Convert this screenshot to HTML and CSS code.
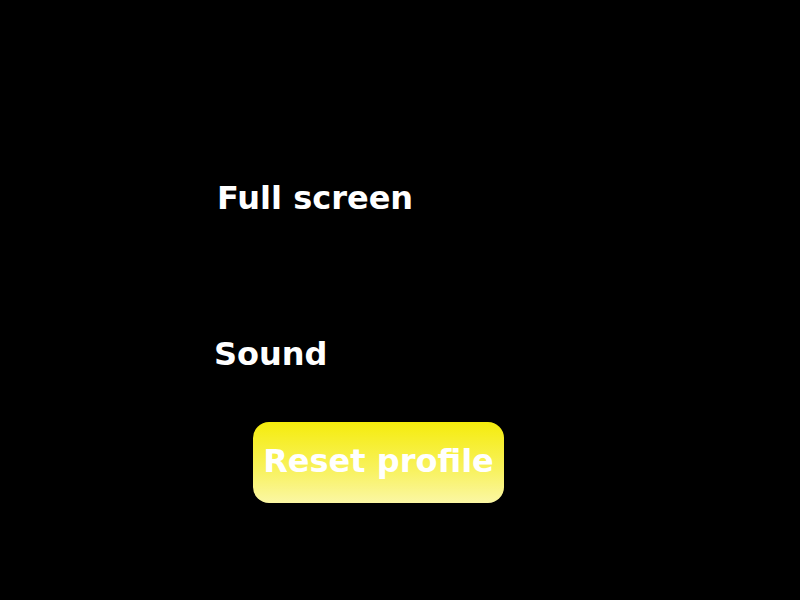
FILE: index.html
```html
<!DOCTYPE html>
<html lang="en">
<head>
  <meta charset="UTF-8">
  <title>Options</title>
  <link rel="stylesheet" href="styles.css">
</head>
<body>

  <div class="menu">
    <div class="option option-fullscreen">Full screen</div>
    <div class="option option-sound">Sound</div>
    <button class="reset-button">Reset profile</button>
  </div>

</body>
</html>
```

FILE: styles.css
```css
html, body {
  margin: 0;
  height: 100%;
  background-color: #000;
}

body {
  font-family: "DejaVu Sans", Verdana, sans-serif;
  font-weight: bold;
  color: #fff;
}

.menu {
  display: flex;
  flex-direction: column;
  align-items: flex-start;
  padding-top: 180px;
}

.option {
  font-size: 32px;
  line-height: 37px;
}

.option-fullscreen {
  margin-left: 217px;
}

.option-sound {
  margin-left: 214px;
  margin-top: 119px;
}

.reset-button {
  margin-top: 49px;
  margin-left: 253px;
  width: 251px;
  height: 81px;
  padding: 21px 0 23px;
  border: none;
  border-radius: 16px;
  background: linear-gradient(to bottom, #f5ec0c 0%, #f8f260 60%, #fbf7a4 100%);
  color: #fff;
  font-family: inherit;
  font-weight: bold;
  font-size: 32px;
  line-height: 37px;
  text-align: center;
  cursor: pointer;
}
```
